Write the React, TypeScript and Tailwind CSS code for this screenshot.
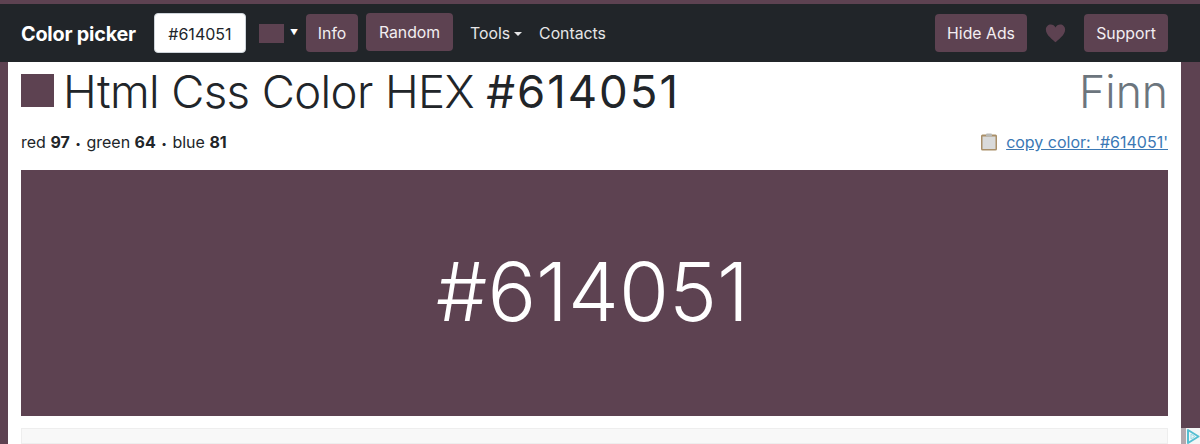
const Navbar = () => {
  return (
    <nav className="mt-1 h-[58px] bg-[#212529] flex items-center pl-[21px] pr-[32px] text-[15.8px]">
      <span className="text-[19.8px] font-bold text-white mr-[18px] mt-[3px] tracking-[-0.2px]">Color picker</span>
      <div className="w-[92px] h-[40px] pt-[2px] bg-white rounded-[4px] border border-[#ced4da] flex items-center justify-center text-[#212529] text-[16px] mr-[13px]">
        #614051
      </div>
      <div className="w-[25px] h-[19px] bg-[#5d4251] mr-[6px]"></div>
      <span className="text-white text-[8px] mr-[8px] mb-[2px]">▼</span>
      <button className="h-[38px] w-[52px] pt-[2px] bg-[#5d4251] text-[#f3eef1] rounded-[4px] mr-[8px]">Info</button>
      <button className="h-[38px] w-[87px] pt-[2px] bg-[#5d4251] text-[#f3eef1] rounded-[4px] mr-[17px] mb-[2px]">Random</button>
      <span className="text-[#e6e6e7] flex items-center mr-[17px] pt-[2px]">
        Tools
        <span className="ml-[4px] mb-[1px] border-x-[4.5px] border-x-transparent border-t-[4.5px] border-t-[#e6e6e7]"></span>
      </span>
      <span className="text-[#e6e6e7] pt-[2px]">Contacts</span>
      <div className="ml-auto flex items-center">
        <button className="h-[38px] w-[92px] pt-[2px] bg-[#5d4251] text-[#f3eef1] rounded-[4px]">Hide Ads</button>
        <svg viewBox="0 0 24 24" className="w-[21px] h-[21px] mx-[18px] fill-[#5d4251]">
          <path d="M12 22 C10 19.6 1 14 1 7.6 C1 3.9 3.7 1.6 6.6 1.6 C9 1.6 11 3 12 5.2 C13 3 15 1.6 17.4 1.6 C20.3 1.6 23 3.9 23 7.6 C23 14 14 19.6 12 22 Z" />
        </svg>
        <button className="h-[38px] w-[84px] pt-[2px] bg-[#5d4251] text-[#f3eef1] rounded-[4px]">Support</button>
      </div>
    </nav>
  );
};

const ClipboardIcon = () => {
  return (
    <svg viewBox="0 0 18 18" className="w-[18px] h-[18px] mr-[8px]">
      <rect x="1" y="1.5" width="16" height="16" rx="1.5" fill="#a98f68" />
      <rect x="2.5" y="3.5" width="13" height="12.5" fill="#d9dada" />
      <rect x="6" y="0.5" width="6" height="3" rx="1" fill="#b9b9b6" />
    </svg>
  );
};

const AdBadge = () => {
  return (
    <div className="absolute right-0 top-[428px] w-[19px] h-[16px] flex">
      <div className="w-[5px] bg-[#b3a8ae]"></div>
      <div className="flex-1 bg-[#f4f6f6]">
        <svg viewBox="0 0 14 16" className="w-[14px] h-[16px]">
          <path d="M2 2 L12.5 8.5 L2 15 Z" fill="none" stroke="#55bfd2" strokeWidth="2" strokeLinejoin="round" />
          <path d="M5 6 L8.8 8.5 L5 11 Z" fill="none" stroke="#9adbe6" strokeWidth="1" />
        </svg>
      </div>
    </div>
  );
};

const App = () => {
  return (
    <div className="relative w-[1200px] h-[444px] overflow-hidden bg-[#5d4251] font-['Inter',sans-serif] text-[#212529]">
      <Navbar />
      <main className="ml-2 w-[1173px] h-[382px] bg-white px-[13px] pt-[1px] flex flex-col">
        <div className="flex items-center justify-between h-[58px]">
          <div className="flex items-center">
            <div className="w-[33px] h-[33px] bg-[#5d4251] mr-[9px] mt-[-3px]"></div>
            <h1 className="text-[45.5px] font-light leading-none tracking-[-0.6px]">
              Html Css Color HEX <span className="font-normal tracking-[2px]">#614051</span>
            </h1>
          </div>
          <span className="text-[44.5px] font-light leading-none text-[#6c757d]">Finn</span>
        </div>
        <div className="flex items-center justify-between h-[24px] mt-[9px] text-[16px]">
          <p>
            red <b className="font-bold">97</b> <span className="text-[10px] align-[1px] mx-[1px]">•</span> green <b className="font-bold">64</b> <span className="text-[10px] align-[1px] mx-[1px]">•</span> blue <b className="font-bold">81</b>
          </p>
          <a href="#" className="flex items-center text-[#3a78b5]">
            <ClipboardIcon />
            <span className="underline">copy color: '#614051'</span>
          </a>
        </div>
        <div className="mt-[16px] h-[246px] bg-[#5d4251] flex items-center justify-center text-white text-[81px] font-light leading-none pb-[1px] pr-[4px]">
          #614051
        </div>
        <div className="mt-[12px] flex-1 bg-[#f8f8f8] border border-[#eeeeee]"></div>
      </main>
      <AdBadge />
    </div>
  );
};

export default App;
